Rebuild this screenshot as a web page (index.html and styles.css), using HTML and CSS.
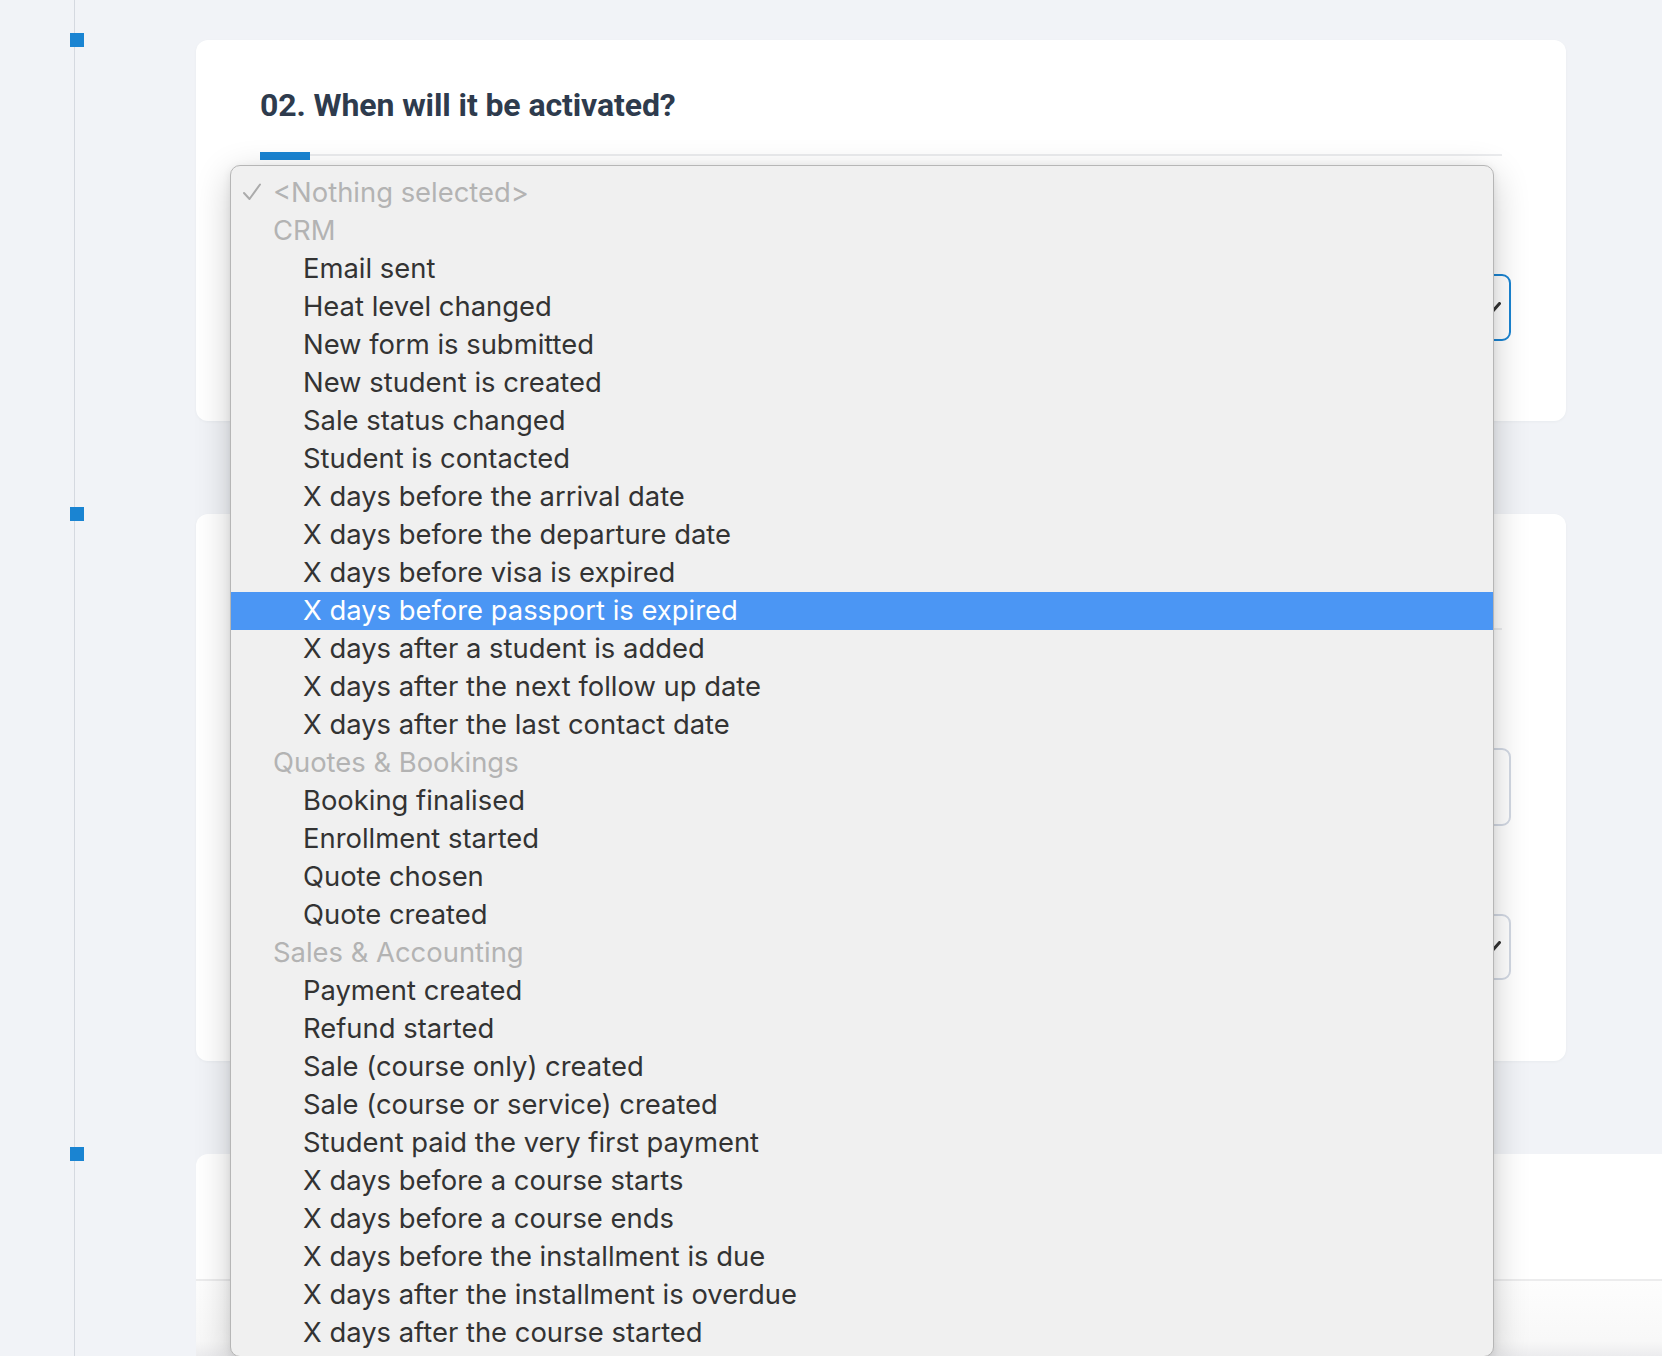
FILE: index.html
```html
<!DOCTYPE html>
<html lang="en">
<head>
<meta charset="utf-8">
<title>Automation – When will it be activated?</title>
<link rel="stylesheet" href="styles.css">
</head>
<body>
<div class="page">
  <div class="timeline">
    <section class="step">
      <span class="marker"></span>
      <div class="card">
        <h2 class="card-title">02. When will it be activated?</h2>
        <div class="tabs"><span class="tab-active"></span></div>
        <div class="field-label"></div>
        <div class="select focused">
          <span class="select-value"></span>
          <svg class="chevron" width="18" height="12" viewBox="0 0 18 12"><polyline points="1.5,1.5 9,10 16.5,1.5" fill="none" stroke="#333" stroke-width="3" stroke-linecap="round" stroke-linejoin="round"/></svg>
        </div>
      </div>
    </section>

    <section class="step">
      <span class="marker"></span>
      <div class="card card-two">
        <div class="card-title"></div>
        <div class="tabs"><span class="tab-active"></span></div>
        <div class="field-label"></div>
        <div class="input tall"></div>
        <div class="field-label second"></div>
        <div class="select">
          <span class="select-value"></span>
          <svg class="chevron" width="18" height="12" viewBox="0 0 18 12"><polyline points="1.5,1.5 9,10 16.5,1.5" fill="none" stroke="#333" stroke-width="3" stroke-linecap="round" stroke-linejoin="round"/></svg>
        </div>
      </div>
    </section>

    <section class="step">
      <span class="marker"></span>
      <div class="panel">
        <div class="panel-top"></div>
        <div class="panel-bottom"></div>
      </div>
    </section>
  </div>

  <div class="popup-menu" role="listbox">
    <div class="menu-row placeholder">
      <svg class="check" width="20" height="18" viewBox="0 0 20 18"><polyline points="2,10 7.5,16 18,1.5" fill="none" stroke="#ababab" stroke-width="2" stroke-linecap="round" stroke-linejoin="round"/></svg>
      <span class="menu-text">&lt;Nothing selected&gt;</span>
    </div>
    <div class="menu-row group">CRM</div>
    <div class="menu-row item">Email sent</div>
    <div class="menu-row item">Heat level changed</div>
    <div class="menu-row item">New form is submitted</div>
    <div class="menu-row item">New student is created</div>
    <div class="menu-row item">Sale status changed</div>
    <div class="menu-row item">Student is contacted</div>
    <div class="menu-row item">X days before the arrival date</div>
    <div class="menu-row item">X days before the departure date</div>
    <div class="menu-row item">X days before visa is expired</div>
    <div class="menu-row item selected">X days before passport is expired</div>
    <div class="menu-row item">X days after a student is added</div>
    <div class="menu-row item">X days after the next follow up date</div>
    <div class="menu-row item">X days after the last contact date</div>
    <div class="menu-row group">Quotes &amp; Bookings</div>
    <div class="menu-row item">Booking finalised</div>
    <div class="menu-row item">Enrollment started</div>
    <div class="menu-row item">Quote chosen</div>
    <div class="menu-row item">Quote created</div>
    <div class="menu-row group">Sales &amp; Accounting</div>
    <div class="menu-row item">Payment created</div>
    <div class="menu-row item">Refund started</div>
    <div class="menu-row item">Sale (course only) created</div>
    <div class="menu-row item">Sale (course or service) created</div>
    <div class="menu-row item">Student paid the very first payment</div>
    <div class="menu-row item">X days before a course starts</div>
    <div class="menu-row item">X days before a course ends</div>
    <div class="menu-row item">X days before the installment is due</div>
    <div class="menu-row item">X days after the installment is overdue</div>
    <div class="menu-row item">X days after the course started</div>
  </div>
</div>
</body>
</html>
```

FILE: styles.css
```css
html, body {
  margin: 0;
  height: 1356px;
  overflow: hidden;
}

body {
  background: #f1f3f7;
  font-family: "Roboto", "Liberation Sans", sans-serif;
  color: #2e3b4d;
}

.page {
  position: relative;
  height: 1356px;
}

.timeline {
  margin-left: 74px;
  border-left: 1px solid #d5d9e0;
  padding: 40px 0 0 121px;
  height: 1316px;
  display: flex;
  flex-direction: column;
  gap: 93px;
}

.step {
  position: relative;
}

.marker {
  position: absolute;
  left: -126px;
  top: -7px;
  width: 14px;
  height: 14px;
  background: #1a84d2;
}

.card {
  width: 1370px;
  box-sizing: border-box;
  background: #fff;
  border-radius: 12px;
  padding: 45px 64px 80px;
  box-shadow: 0 1px 3px rgba(30, 40, 60, 0.04);
}

.card-two {
  padding-bottom: 81px;
}

.card-title {
  margin: 0;
  height: 40px;
  font-size: 32px;
  line-height: 40px;
  font-weight: 700;
  color: #2e3b4d;
  letter-spacing: -0.1px;
}

.tabs {
  margin-top: 27px;
  height: 8px;
  background: linear-gradient(#ebecee, #ebecee) 0 2px / 100% 2px no-repeat;
}

.tab-active {
  display: block;
  width: 50px;
  height: 8px;
  background: #1a84d2;
}

.field-label {
  margin-top: 58px;
  height: 24px;
}

.field-label.second {
  margin-top: 40px;
}

.select,
.input {
  margin: 32px -9px 0 0;
  height: 67px;
  box-sizing: border-box;
  border: 2px solid #d3d9e4;
  border-radius: 9px;
  display: flex;
  align-items: center;
  justify-content: space-between;
  padding: 0 8px 0 20px;
}

.select.focused {
  border-color: #1a84d2;
}

.input.tall {
  height: 78px;
}

.card-two .select {
  margin-top: 24px;
  height: 66px;
}

.chevron {
  display: block;
}

.panel {
  width: 1466px;
  height: 202px;
  background: #fff;
  border-radius: 12px 0 0 0;
  display: flex;
  flex-direction: column;
}

.panel-top {
  height: 127px;
  box-sizing: border-box;
  border-bottom: 2px solid #ececed;
}

.panel-bottom {
  flex: 1;
  background: linear-gradient(#fdfdfd, #f8f8f8 80%, #ececee);
}

/* native-style popup menu */
.popup-menu {
  position: absolute;
  left: 230px;
  top: 165px;
  width: 1264px;
  height: 1192px;
  box-sizing: border-box;
  padding-top: 8px;
  background: #f0f0f0;
  border: 1px solid #b6b6b6;
  border-radius: 10px;
  box-shadow: 0 10px 36px rgba(0, 0, 0, 0.2), 0 2px 8px rgba(0, 0, 0, 0.08);
  font-family: "Inter", "Liberation Sans", sans-serif;
  font-size: 27.4px;
  color: #333;
  overflow: hidden;
}

.menu-row {
  height: 38px;
  box-sizing: border-box;
  padding-bottom: 3px;
  white-space: nowrap;
  padding-left: 42px;
  display: flex;
  align-items: center;
}

.menu-row.placeholder {
  padding-left: 11px;
  color: #b3b3b3;
}

.menu-row.placeholder .check {
  margin-right: 11px;
}

.menu-row.group {
  color: #b3b3b3;
}

.menu-row.item {
  padding-left: 72px;
}

.menu-row.selected {
  background: #4b96f4;
  color: #fff;
}
```
